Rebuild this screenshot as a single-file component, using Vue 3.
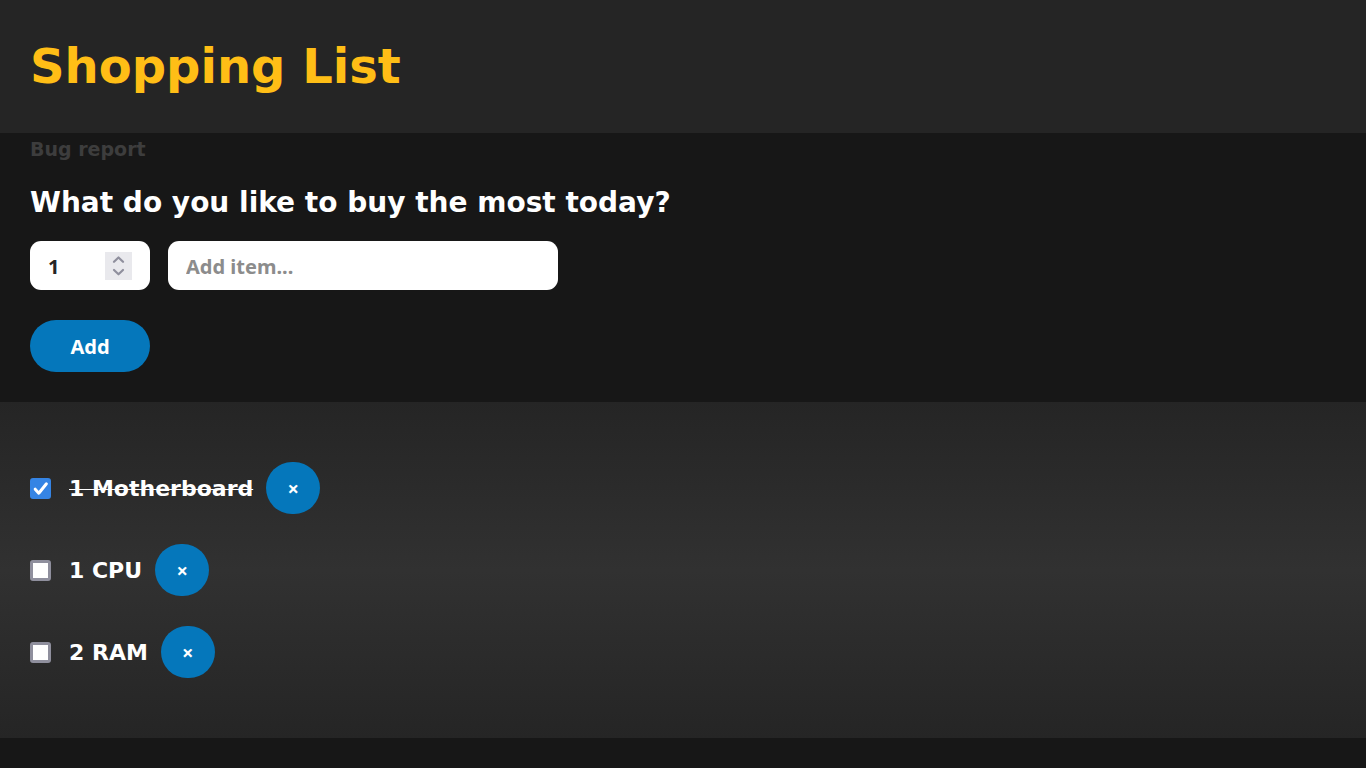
<script setup>
import { ref } from 'vue'

const quantity = ref(1)
const newItem = ref('')
const items = ref([
  { id: 1, quantity: 1, name: 'Motherboard', done: true },
  { id: 2, quantity: 1, name: 'CPU', done: false },
  { id: 3, quantity: 2, name: 'RAM', done: false },
])

function step(amount) {
  quantity.value = Math.max(1, Number(quantity.value) + amount)
}

function addItem() {
  const name = newItem.value.trim()
  if (!name) return
  items.value.push({ id: Date.now(), quantity: quantity.value, name, done: false })
  newItem.value = ''
  quantity.value = 1
}

function removeItem(id) {
  items.value = items.value.filter((item) => item.id !== id)
}
</script>

<template>
  <div class="page">
    <header class="header">
      <h1>Shopping List</h1>
    </header>

    <a class="bug-link" href="#bug-report">Bug report</a>

    <form class="add-form" @submit.prevent="addItem">
      <h2>What do you like to buy the most today?</h2>
      <div class="fields">
        <div class="quantity">
          <input v-model="quantity" class="field" type="number" min="1" aria-label="Quantity" />
          <div class="stepper">
            <button type="button" aria-label="Increase" @click="step(1)">
              <svg width="13" height="8" viewBox="0 0 13 8"><path d="M2 5.8 6.5 1.5 11 5.8" /></svg>
            </button>
            <button type="button" aria-label="Decrease" @click="step(-1)">
              <svg width="13" height="8" viewBox="0 0 13 8"><path d="M2 2 6.5 6.3 11 2" /></svg>
            </button>
          </div>
        </div>
        <input v-model="newItem" class="field name" type="text" placeholder="Add item..." aria-label="Item name" />
      </div>
      <button class="btn add" type="submit">Add</button>
    </form>

    <ul class="list">
      <li v-for="item in items" :key="item.id">
        <input :id="`item-${item.id}`" v-model="item.done" type="checkbox" />
        <label :for="`item-${item.id}`" :class="{ done: item.done }">{{ item.quantity }} {{ item.name }}</label>
        <button class="btn remove" type="button" :aria-label="`Remove ${item.name}`" @click="removeItem(item.id)">×</button>
      </li>
    </ul>
  </div>
</template>

<style>
body {
  margin: 0;
  background: #171717;
}
</style>

<style scoped>
.page {
  color: #fff;
  font-family: "DejaVu Sans", sans-serif;
  font-weight: 700;
}

.header {
  padding: 38px 30px 39px;
  background: #252525;
}

h1 {
  margin: 0;
  color: #ffbe16;
  font-size: 48px;
  line-height: 56px;
}

.bug-link {
  display: block;
  width: fit-content;
  margin-left: 30px;
  color: #3d3d3d;
  font-size: 19px;
  line-height: 32px;
  text-decoration: none;
}

.add-form {
  padding: 20px 30px 30px;
}

h2 {
  margin: 0 0 20px;
  font-size: 28px;
  line-height: 36px;
}

.fields {
  display: flex;
  gap: 18px;
  margin-bottom: 30px;
}

.quantity {
  position: relative;
  width: 120px;
}

.field {
  box-sizing: border-box;
  width: 100%;
  height: 49px;
  padding: 2px 18px 0;
  border: 0;
  border-radius: 11px;
  background: #fff;
  color: #252525;
  font: 700 20px "Noto Sans", sans-serif;
}

.name {
  max-width: 390px;
}

.field::placeholder {
  color: #8c8c8c;
  opacity: 1;
}

.field[type='number'] {
  appearance: textfield;
}

.field::-webkit-inner-spin-button {
  appearance: none;
  margin: 0;
}

.stepper {
  position: absolute;
  top: 11px;
  right: 18px;
  display: flex;
  flex-direction: column;
  width: 27px;
  height: 28px;
  background: #e9e9ed;
}

.stepper button {
  display: flex;
  flex: 1;
  justify-content: center;
  align-items: flex-end;
  padding: 0 0 2px;
  border: 0;
  background: none;
}

.stepper button:last-child {
  align-items: flex-start;
  padding: 2px 0 0;
}

.stepper path {
  fill: none;
  stroke: #8f8f9d;
  stroke-width: 2.2;
  stroke-linecap: round;
  stroke-linejoin: round;
}

.btn {
  height: 52px;
  padding: 0;
  border: 0;
  border-radius: 27px;
  background: #0577bb;
  color: #fff;
  font: 700 20px "Noto Sans", sans-serif;
  cursor: pointer;
}

.add {
  display: block;
  width: 120px;
}

.list {
  display: flex;
  flex-direction: column;
  gap: 30px;
  margin: 0;
  padding: 60px 30px;
  background: linear-gradient(#252525, #313131, #252525);
  list-style: none;
}

li {
  display: flex;
  align-items: center;
}

li input {
  flex: none;
  box-sizing: border-box;
  width: 21px;
  height: 21px;
  margin: 1px 18px 0 0;
  border: 3px solid #8f8f9d;
  border-radius: 3px;
  appearance: none;
  background: #fff;
}

li input:checked {
  border-color: #3584e4;
  background: #3584e4 url("data:image/svg+xml,%3Csvg xmlns='http://www.w3.org/2000/svg' viewBox='0 0 21 21'%3E%3Cpath d='M5.2 11.2 8.8 15.2 16.4 5.8' fill='none' stroke='white' stroke-width='3' stroke-linecap='round' stroke-linejoin='round'/%3E%3C/svg%3E") center / 21px 21px no-repeat border-box;
}

label {
  margin-right: 13px;
  padding-top: 2px;
  font-size: 22px;
  line-height: 26px;
}

.done {
  text-decoration: line-through;
  text-decoration-thickness: 1px;
}

.remove {
  width: 54px;
}
</style>
